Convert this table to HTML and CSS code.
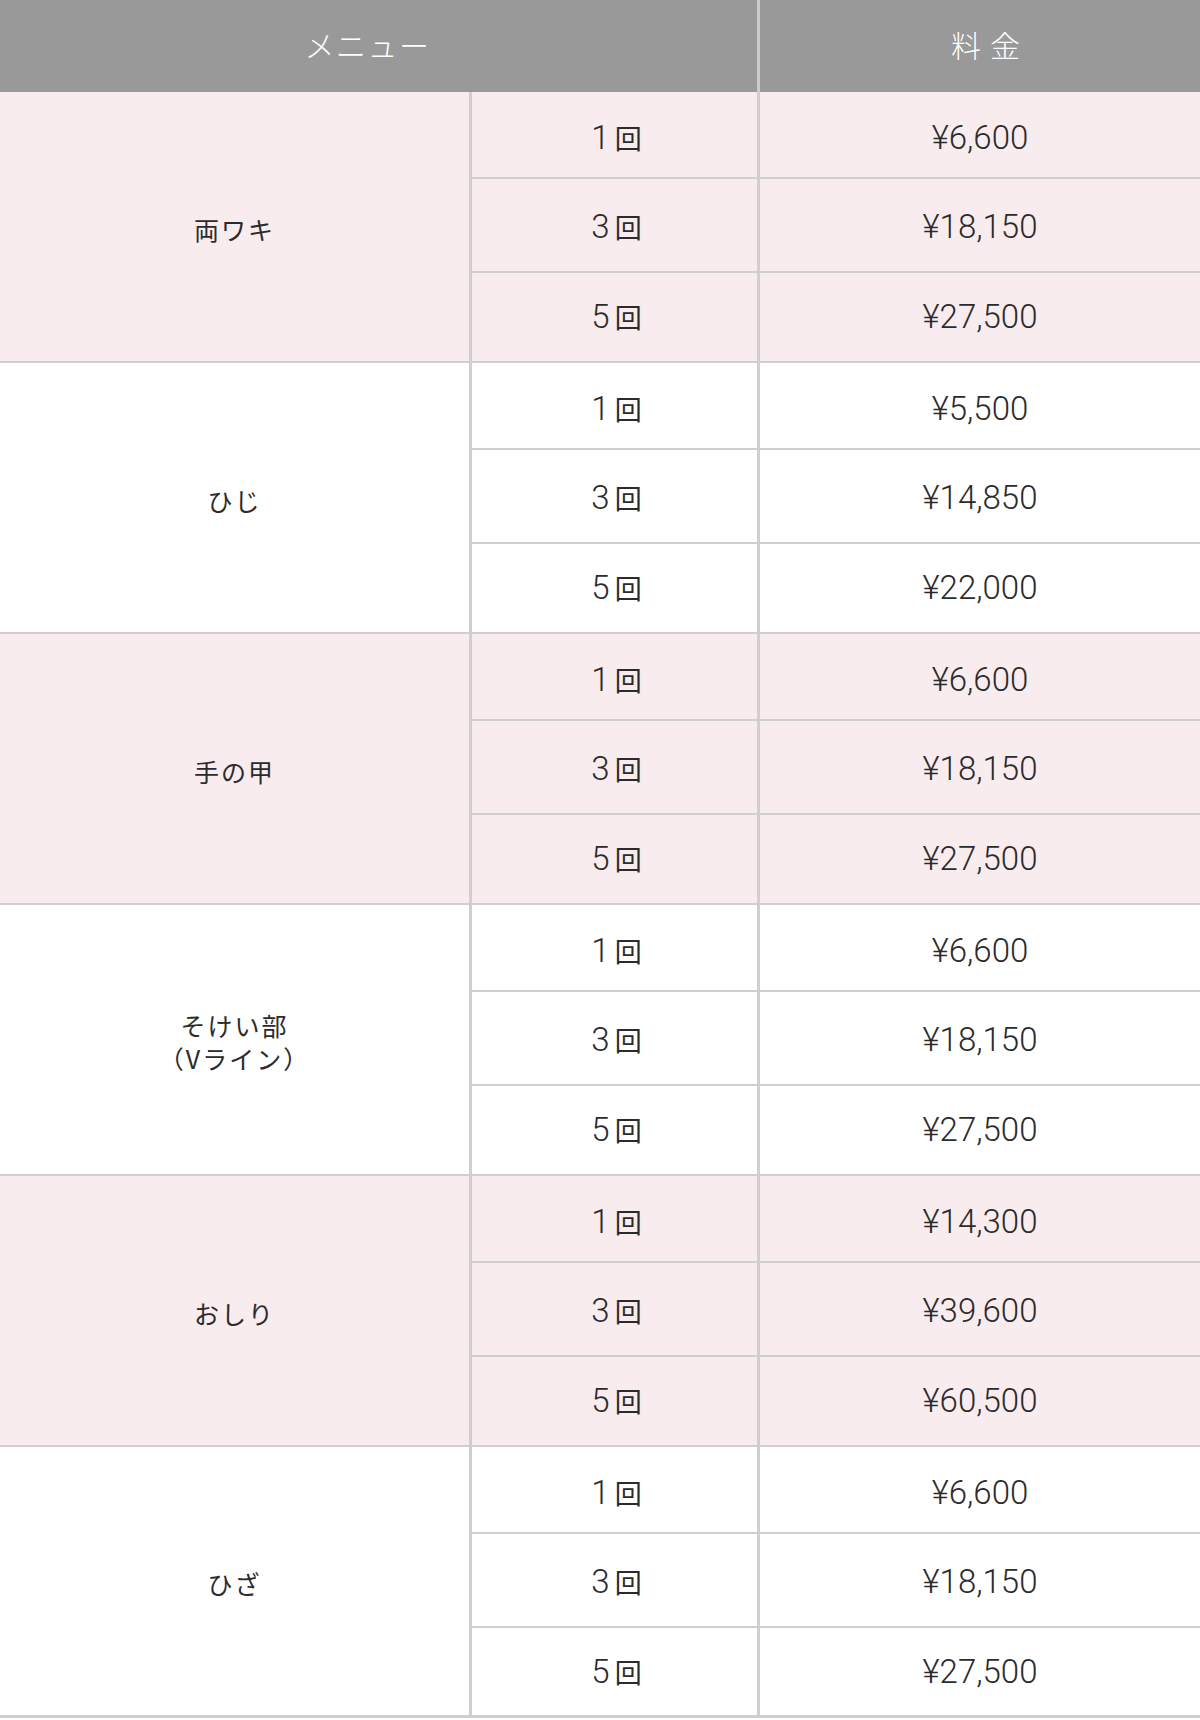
FILE: index.html
```html
<!DOCTYPE html>
<html lang="ja">

<head>
    <meta charset="UTF-8">
    <meta name="viewport" content="width=device-width, initial-scale=1.0">
    <title>料金表</title>
    <link rel="stylesheet" href="styles.css">
</head>

<body>
    <div class="price-table">
        <div class="table-head">
            <div class="head-menu">メニュー</div>
            <div class="head-price">料金</div>
        </div>

        <div class="group pink">
            <div class="label">両ワキ</div>
            <div class="count"><span class="num">1</span>回</div>
            <div class="price">¥6,600</div>
            <div class="count"><span class="num">3</span>回</div>
            <div class="price">¥18,150</div>
            <div class="count"><span class="num">5</span>回</div>
            <div class="price">¥27,500</div>
        </div>

        <div class="group">
            <div class="label">ひじ</div>
            <div class="count"><span class="num">1</span>回</div>
            <div class="price">¥5,500</div>
            <div class="count"><span class="num">3</span>回</div>
            <div class="price">¥14,850</div>
            <div class="count"><span class="num">5</span>回</div>
            <div class="price">¥22,000</div>
        </div>

        <div class="group pink">
            <div class="label">手の甲</div>
            <div class="count"><span class="num">1</span>回</div>
            <div class="price">¥6,600</div>
            <div class="count"><span class="num">3</span>回</div>
            <div class="price">¥18,150</div>
            <div class="count"><span class="num">5</span>回</div>
            <div class="price">¥27,500</div>
        </div>

        <div class="group">
            <div class="label">そけい部<br>（Vライン）</div>
            <div class="count"><span class="num">1</span>回</div>
            <div class="price">¥6,600</div>
            <div class="count"><span class="num">3</span>回</div>
            <div class="price">¥18,150</div>
            <div class="count"><span class="num">5</span>回</div>
            <div class="price">¥27,500</div>
        </div>

        <div class="group pink">
            <div class="label">おしり</div>
            <div class="count"><span class="num">1</span>回</div>
            <div class="price">¥14,300</div>
            <div class="count"><span class="num">3</span>回</div>
            <div class="price">¥39,600</div>
            <div class="count"><span class="num">5</span>回</div>
            <div class="price">¥60,500</div>
        </div>

        <div class="group">
            <div class="label">ひざ</div>
            <div class="count"><span class="num">1</span>回</div>
            <div class="price">¥6,600</div>
            <div class="count"><span class="num">3</span>回</div>
            <div class="price">¥18,150</div>
            <div class="count"><span class="num">5</span>回</div>
            <div class="price">¥27,500</div>
        </div>
    </div>
</body>

</html>
```

FILE: styles.css
```css
body {
    margin: 0;
    padding: 0;
    background-color: #fff;
    color: #2b2b2b;
    font-family: "Noto Sans CJK JP", "Noto Sans", sans-serif;
    font-weight: 400;
}

.price-table {
    width: 1200px;
}

.table-head {
    display: grid;
    grid-template-columns: 760px 1fr;
    height: 92px;
    background-color: #999;
    color: #fff;
    font-size: 30px;
    font-weight: 300;
}

.head-menu,
.head-price {
    display: flex;
    align-items: center;
    justify-content: center;
    padding-bottom: 4px;
}

.head-menu {
    border-right: 3px solid #cbcbcb;
    letter-spacing: 0.05em;
    padding-right: 22px;
}

.head-price {
    letter-spacing: 0.3em;
    padding-left: 20px;
}

.group {
    display: grid;
    grid-template-columns: 472px 288px 1fr;
    grid-template-rows: 87px 94px 90px;
    background-color: #fff;
    font-size: 25px;
}

.group.pink {
    background-color: #f8ecef;
}

.label,
.count,
.price {
    display: flex;
    align-items: center;
    justify-content: center;
    text-align: center;
    border-bottom: 2px solid #cfcfcf;
}

.label {
    grid-row: span 3;
    border-right: 3px solid #cfcfcf;
    letter-spacing: 0.08em;
    line-height: 1.32;
    padding-top: 5px;
}

.count {
    border-right: 3px solid #cfcfcf;
    font-size: 27px;
    padding-left: 4px;
}

.num,
.price {
    font-family: Roboto, "Noto Sans CJK JP", sans-serif;
    font-weight: 300;
}

.num {
    font-size: 33px;
    margin-right: 5px;
}

.price {
    font-size: 33px;
    letter-spacing: 0;
}

/* rows sit a little differently in each line */
.count:nth-child(2),
.price:nth-child(3) {
    padding-top: 5px;
}

.count:nth-child(4),
.price:nth-child(5) {
    padding-top: 3px;
}

.count:nth-child(6),
.price:nth-child(7) {
    padding-bottom: 1px;
}

.group:last-child .label,
.group:last-child .price:last-child,
.group:last-child .count:nth-last-child(2) {
    border-bottom-width: 3px;
}
```
